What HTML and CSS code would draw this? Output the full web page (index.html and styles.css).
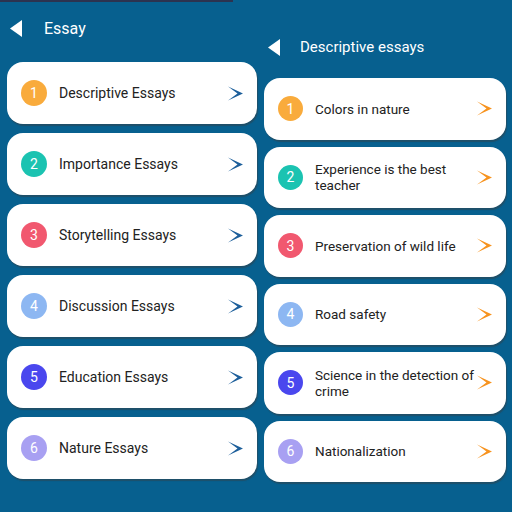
FILE: index.html
```html
<!DOCTYPE html>
<html>
<head>
<meta charset="utf-8">
<link rel="stylesheet" href="styles.css">
</head>
<body>
<div class="screen">
  <section class="panel panel-left">
    <div class="topstrip"></div>
    <header class="bar bar-left">
      <svg class="back" width="12" height="17" viewBox="0 0 12 17"><polygon points="12,0 12,17 0,8.5" fill="#fff"/></svg>
      <span class="title">Essay</span>
    </header>
    <ul class="list list-left">
      <li class="card"><span class="num c1">1</span><span class="label">Descriptive Essays</span><svg class="chev" width="15" height="15" viewBox="0 0 15 15"><polygon points="0,0.5 15,7.5 0,14.5 9.5,7.5" fill="#1d5f9b"/></svg></li>
      <li class="card"><span class="num c2">2</span><span class="label">Importance Essays</span><svg class="chev" width="15" height="15" viewBox="0 0 15 15"><polygon points="0,0.5 15,7.5 0,14.5 9.5,7.5" fill="#1d5f9b"/></svg></li>
      <li class="card"><span class="num c3">3</span><span class="label">Storytelling Essays</span><svg class="chev" width="15" height="15" viewBox="0 0 15 15"><polygon points="0,0.5 15,7.5 0,14.5 9.5,7.5" fill="#1d5f9b"/></svg></li>
      <li class="card"><span class="num c4">4</span><span class="label">Discussion Essays</span><svg class="chev" width="15" height="15" viewBox="0 0 15 15"><polygon points="0,0.5 15,7.5 0,14.5 9.5,7.5" fill="#1d5f9b"/></svg></li>
      <li class="card"><span class="num c5">5</span><span class="label">Education Essays</span><svg class="chev" width="15" height="15" viewBox="0 0 15 15"><polygon points="0,0.5 15,7.5 0,14.5 9.5,7.5" fill="#1d5f9b"/></svg></li>
      <li class="card"><span class="num c6">6</span><span class="label">Nature Essays</span><svg class="chev" width="15" height="15" viewBox="0 0 15 15"><polygon points="0,0.5 15,7.5 0,14.5 9.5,7.5" fill="#1d5f9b"/></svg></li>
    </ul>
  </section>
  <section class="panel panel-right">
    <header class="bar bar-right">
      <svg class="back" width="12" height="17" viewBox="0 0 12 17"><polygon points="12,0 12,17 0,8.5" fill="#fff"/></svg>
      <span class="title title-right">Descriptive essays</span>
    </header>
    <ul class="list list-right">
      <li class="card card-r"><span class="num c1">1</span><span class="label">Colors in nature</span><svg class="chev" width="15" height="15" viewBox="0 0 15 15"><polygon points="0,0.5 15,7.5 0,14.5 9.5,7.5" fill="#f7931e"/></svg></li>
      <li class="card card-r"><span class="num c2">2</span><span class="label">Experience is the best teacher</span><svg class="chev" width="15" height="15" viewBox="0 0 15 15"><polygon points="0,0.5 15,7.5 0,14.5 9.5,7.5" fill="#f7931e"/></svg></li>
      <li class="card card-r"><span class="num c3">3</span><span class="label">Preservation of wild life</span><svg class="chev" width="15" height="15" viewBox="0 0 15 15"><polygon points="0,0.5 15,7.5 0,14.5 9.5,7.5" fill="#f7931e"/></svg></li>
      <li class="card card-r"><span class="num c4">4</span><span class="label">Road safety</span><svg class="chev" width="15" height="15" viewBox="0 0 15 15"><polygon points="0,0.5 15,7.5 0,14.5 9.5,7.5" fill="#f7931e"/></svg></li>
      <li class="card card-r"><span class="num c5">5</span><span class="label">Science in the detection of crime</span><svg class="chev" width="15" height="15" viewBox="0 0 15 15"><polygon points="0,0.5 15,7.5 0,14.5 9.5,7.5" fill="#f7931e"/></svg></li>
      <li class="card card-r"><span class="num c6">6</span><span class="label">Nationalization</span><svg class="chev" width="15" height="15" viewBox="0 0 15 15"><polygon points="0,0.5 15,7.5 0,14.5 9.5,7.5" fill="#f7931e"/></svg></li>
    </ul>
  </section>
</div>
</body>
</html>
```

FILE: styles.css
```css
html, body {
  margin: 0;
  padding: 0;
  width: 512px;
  height: 512px;
  overflow: hidden;
  background: #07608f;
  font-family: Roboto, "Noto Sans", "Liberation Sans", sans-serif;
}
.screen {
  display: flex;
  width: 512px;
  height: 512px;
}
.panel {
  display: flex;
  flex-direction: column;
}
.panel-left {
  width: 258px;
  padding-left: 7px;
  box-sizing: border-box;
}
.panel-right {
  width: 254px;
  padding-left: 6px;
  box-sizing: border-box;
}
.topstrip {
  height: 2px;
  width: 233px;
  margin-left: -7px;
  background: #2c3350;
}
.bar {
  display: flex;
  align-items: center;
  color: #fff;
}
.bar-left {
  height: 52px;
  padding-left: 3px;
  margin-bottom: 8px;
}
.bar-right {
  height: 30px;
  margin-top: 32px;
  padding-left: 4px;
  margin-bottom: 16px;
}
.back {
  flex: none;
}
.title {
  font-size: 16px;
  margin-left: 22px;
}
.title-right {
  font-size: 15px;
  margin-left: 20px;
}
.list {
  list-style: none;
  margin: 0;
  padding: 0;
  display: flex;
  flex-direction: column;
}
.list-left { gap: 9px; }
.list-right { gap: 7px; }
.card {
  display: flex;
  align-items: center;
  background: #fff;
  border-radius: 16px;
  box-shadow: 1px 2px 1px rgba(60, 60, 60, 0.45);
  height: 62px;
  width: 250px;
  box-sizing: border-box;
  padding: 0 14px 0 14px;
}
.card-r {
  height: 61.5px;
  width: 242px;
  padding: 0 14px 0 14px;
}
.num {
  flex: none;
  width: 26px;
  height: 26px;
  border-radius: 50%;
  color: #fff;
  font-size: 14px;
  display: flex;
  align-items: center;
  justify-content: center;
}
.card-r .num {
  width: 25px;
  height: 25px;
}
.c1 { background: #f9ab3c; }
.c2 { background: #1bc3b1; }
.c3 { background: #f1586f; }
.c4 { background: #8db7f2; }
.c5 { background: #4a47ee; }
.c6 { background: #a8a0f2; }
.label {
  flex: 1;
  margin-left: 12px;
  font-size: 14px;
  color: #222;
  line-height: 16px;
}
.chev {
  flex: none;
  margin-left: 4px;
}
.card-r .label {
  margin-left: 12px;
  font-size: 13.5px;
  margin-right: -6px;
}
.card-r .chev {
  margin-left: 0;
}
```
